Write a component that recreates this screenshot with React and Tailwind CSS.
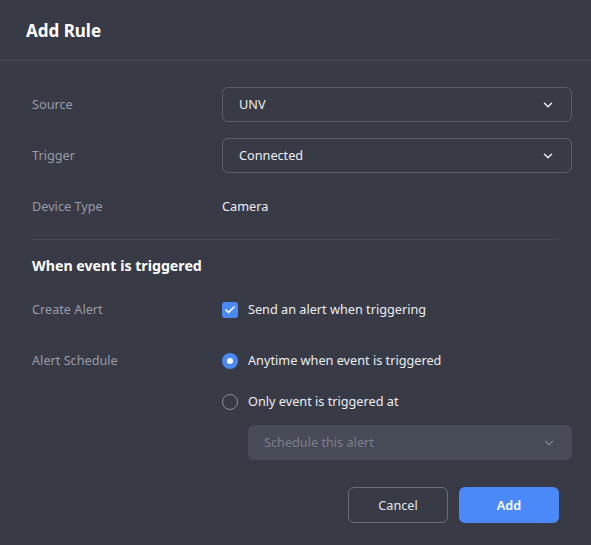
import { ChevronDown, Check } from 'lucide-react';

function Select({ value, disabled }) {
  return (
    <div
      className={`flex h-[35px] w-full items-center justify-between rounded-md px-4 ${
        disabled
          ? 'bg-[#474a57] text-[#7c7f8b]'
          : 'border border-[#5b5e6a] text-[#eceef2]'
      }`}
    >
      <span>{value}</span>
      <ChevronDown
        size={14}
        strokeWidth={2.5}
        className={disabled ? 'text-[#7c7f8b]' : 'text-[#eceef2]'}
      />
    </div>
  );
}

function Row({ label, children, className = '' }) {
  return (
    <div className={`flex items-center ${className}`}>
      <div className="w-[190px] shrink-0 text-[#9a9ca7]">{label}</div>
      <div className="flex-1">{children}</div>
    </div>
  );
}

export default function App() {
  return (
    <div
      className="h-[545px] w-[591px] bg-[#383a46] text-[12.7px]"
      style={{ fontFamily: '"Noto Sans", "Open Sans", sans-serif' }}
    >
      {/* Header */}
      <div className="flex h-[61px] items-center border-b border-[#464855] px-[26px] pt-[2px]">
        <h1 className="text-[17px] font-bold text-white">Add Rule</h1>
      </div>

      <div className="pl-[32px] pr-[19px] pt-[26px]">
        <Row label="Source">
          <Select value="UNV" />
        </Row>
        <Row label="Trigger" className="mt-[16px]">
          <Select value="Connected" />
        </Row>
        <Row label="Device Type" className="mt-[17px] h-[34px]">
          <span className="text-[#eceef2]">Camera</span>
        </Row>

        <div className="mr-[13px] mt-[15px] border-t border-[#474955]" />

        <h2 className="mt-[15px] text-[14.2px] font-bold text-white">When event is triggered</h2>

        <Row label="Create Alert" className="mt-[24px]">
          <label className="flex items-center gap-[10px] text-[#eceef2]">
            <span className="flex h-4 w-4 items-center justify-center rounded-[3px] bg-[#4b89f5]">
              <Check size={12} strokeWidth={3.5} className="text-white" />
            </span>
            Send an alert when triggering
          </label>
        </Row>

        <Row label="Alert Schedule" className="mt-[32px]">
          <label className="flex items-center gap-[10px] text-[#eceef2]">
            <span className="flex h-4 w-4 items-center justify-center rounded-full bg-[#4b89f5]">
              <span className="h-[6px] w-[6px] rounded-full bg-white" />
            </span>
            Anytime when event is triggered
          </label>
        </Row>

        <div className="ml-[190px] mt-[22px]">
          <label className="flex items-center gap-[10px] text-[#eceef2]">
            <span className="h-4 w-4 rounded-full border border-[#8a8c96]" />
            Only event is triggered at
          </label>
          <div className="ml-[26px] mt-[14px]">
            <Select value="Schedule this alert" disabled />
          </div>
        </div>

        <div className="mr-[13px] mt-[27px] flex justify-end gap-[11px]">
          <button className="h-[36px] w-[100px] rounded-md border border-[#6b6e7a] text-[#e4e6ea]">
            Cancel
          </button>
          <button className="h-[36px] w-[100px] rounded-md bg-[#4b89f8] font-semibold text-white">
            Add
          </button>
        </div>
      </div>
    </div>
  );
}
